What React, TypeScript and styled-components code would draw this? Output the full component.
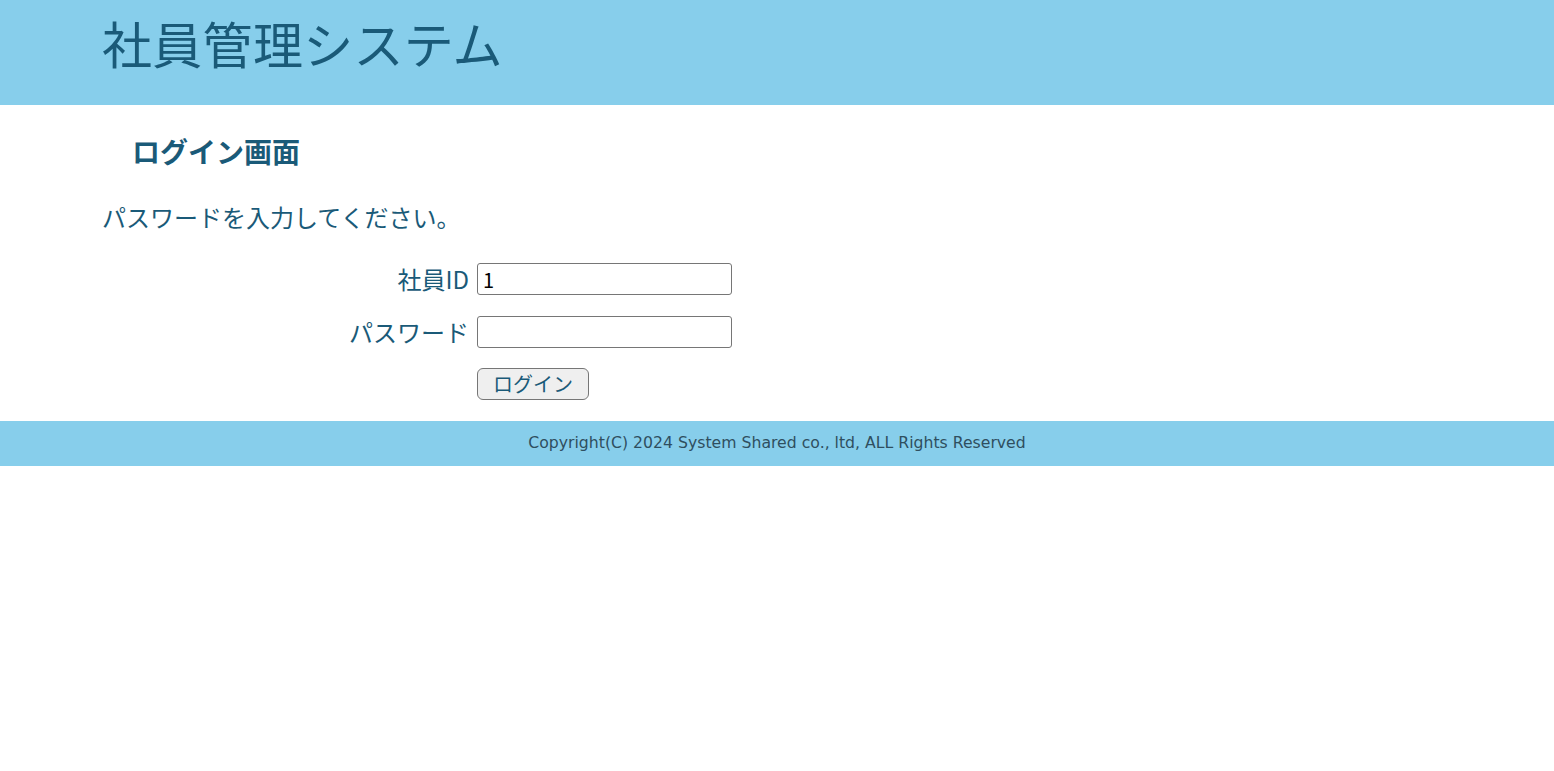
import React from "react";
import styled, { createGlobalStyle } from "styled-components";

const GlobalStyle = createGlobalStyle`
  html, body {
    margin: 0;
    padding: 0;
    background: #ffffff;
    font-family: "Noto Sans CJK JP", "Noto Sans", sans-serif;
    color: #1a5a78;
  }
  * { box-sizing: border-box; }
`;

const Header = styled.header`
  background: #87ceeb;
  height: 105px;
  padding: 17px 0 0 102px;
`;

const Title = styled.h1`
  margin: 0;
  font-size: 50px;
  line-height: 50px;
  font-weight: 400;
  letter-spacing: 0.3px;
  color: #1a5a78;
`;

const Main = styled.main`
  padding: 32px 0 21px 102px;
`;

const Heading = styled.h2`
  margin: 0 0 40px 30px;
  font-size: 28px;
  line-height: 28px;
  font-weight: 700;
  color: #1a5a78;
`;

const Lead = styled.p`
  margin: 0 0 34px 0;
  font-size: 24px;
  line-height: 24px;
`;

const Form = styled.form`
  display: grid;
  grid-template-columns: 367px 255px;
  column-gap: 8px;
  row-gap: 20.5px;
  align-items: center;
`;

const Label = styled.label`
  text-align: right;
  font-size: 24px;
  line-height: 32px;
  white-space: nowrap;
`;

const Input = styled.input`
  width: 255px;
  height: 32px;
  margin: 0;
  padding: 0 5px;
  border: 1px solid #767676;
  border-radius: 3px;
  font-family: "Noto Sans CJK JP", "Noto Sans", sans-serif;
  font-size: 20px;
  color: #000;
  background: #fff;
`;

const Button = styled.button`
  grid-column: 2;
  justify-self: start;
  width: 112px;
  height: 32px;
  margin: 0;
  padding: 0;
  border: 1px solid #767676;
  border-radius: 6px;
  background: #efefef;
  font-family: "Noto Sans CJK JP", "Noto Sans", sans-serif;
  font-size: 20px;
  line-height: 30px;
  color: #1a5a78;
`;

const Footer = styled.footer`
  background: #87ceeb;
  height: 45px;
  display: flex;
  align-items: center;
  justify-content: center;
  padding-bottom: 2px;
  font-family: "DejaVu Sans", "Noto Sans", sans-serif;
  font-size: 15.7px;
  color: #2f4f5f;
`;

export default function App() {
  return (
    <>
      <GlobalStyle />
      <Header>
        <Title>社員管理システム</Title>
      </Header>
      <Main>
        <Heading>ログイン画面</Heading>
        <Lead>パスワードを入力してください。</Lead>
        <Form onSubmit={(e) => e.preventDefault()}>
          <Label htmlFor="empId">社員ID</Label>
          <Input id="empId" type="text" defaultValue="1" />
          <Label htmlFor="pw">パスワード</Label>
          <Input id="pw" type="password" />
          <Button type="submit">ログイン</Button>
        </Form>
      </Main>
      <Footer>Copyright(C) 2024 System Shared co., ltd, ALL Rights Reserved</Footer>
    </>
  );
}
